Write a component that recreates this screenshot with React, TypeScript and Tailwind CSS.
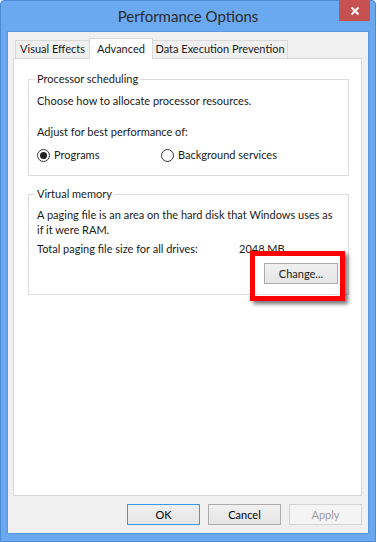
import React from 'react';

const font = { fontFamily: 'Lato, "Noto Sans", sans-serif' };

function Radio({ checked, label }: { checked?: boolean; label: string }) {
  return (
    <label className="flex items-center gap-[4px]">
      <span className="flex h-[13px] w-[13px] items-center justify-center rounded-full border border-[#333] bg-white">
        {checked && <span className="h-[7px] w-[7px] rounded-full bg-[#222]" />}
      </span>
      <span>{label}</span>
    </label>
  );
}

function GroupBox({ title, children }: { title: string; children: React.ReactNode }) {
  return (
    <div className="relative border border-[#dcdcdc]">
      <span className="absolute -top-[9px] left-[6px] bg-white px-[2px] leading-[16px]">{title}</span>
      {children}
    </div>
  );
}

function Button({ label, primary, disabled }: { label: string; primary?: boolean; disabled?: boolean }) {
  return (
    <button
      className={
        'flex h-[21px] w-[73px] items-center justify-center border bg-gradient-to-b from-[#f0f0f0] to-[#e5e5e5] leading-none ' +
        (primary
          ? 'border-[#3c96e4] text-black'
          : disabled
            ? 'border-[#d4d4d4] from-[#f4f4f4] to-[#f4f4f4] text-[#9c9c9c]'
            : 'border-[#acacac] text-black')
      }
    >
      {label}
    </button>
  );
}

export default function App() {
  return (
    <div className="h-[542px] w-[377px] bg-white text-[11px] text-[#1a1a1a]" style={font}>
      <div className="flex h-[542px] w-[376px] flex-col rounded-t-[4px] border border-[#4d8ad6] bg-[#6aa8f0]">
        <div className="relative flex h-[30px] items-center justify-center">
          <span className="text-[15px] text-[#2b2b2b]">Performance Options</span>
          <div className="absolute right-[5px] top-[-1px] flex h-[21px] w-[31px] items-center justify-center bg-[#c75050]">
            <svg width="10" height="10" viewBox="0 0 10 10">
              <path d="M1.5 1.5 L8.5 8.5 M8.5 1.5 L1.5 8.5" stroke="white" strokeWidth="2" />
            </svg>
          </div>
        </div>

        <div className="mx-[6px] mb-[7px] flex flex-1 flex-col border border-[#5a96dd] bg-[#f0f0f0] pl-[5px] pr-[6px] pt-[6px]">
          <div className="flex items-end pl-[2px]">
            <div className="flex h-[18px] w-[74px] items-center justify-center border border-b-0 border-r-0 border-[#d9d9d9] bg-[#f0f0f0]">Visual Effects</div>
            <div className="relative z-10 -mb-px flex h-[21px] w-[64px] items-center justify-center border border-b-0 border-[#d9d9d9] bg-white">Advanced</div>
            <div className="flex h-[18px] w-[135px] items-center justify-center border border-b-0 border-l-0 border-[#d9d9d9] bg-[#f0f0f0]">Data Execution Prevention</div>
          </div>

          <div className="h-[438px] border border-[#d9d9d9] bg-white pl-[14px] pr-[12px] pt-[20px]">
            <GroupBox title="Processor scheduling">
              <div className="pb-[12px] pl-[8px] pt-[13px] leading-[16px]">
                <div>Choose how to allocate processor resources.</div>
                <div className="mt-[15px]">Adjust for best performance of:</div>
                <div className="mt-[7px] flex">
                  <div className="w-[124px]">
                    <Radio checked label="Programs" />
                  </div>
                  <Radio label="Background services" />
                </div>
              </div>
            </GroupBox>

            <div className="mt-[18px]">
              <GroupBox title="Virtual memory">
                <div className="pb-[10px] pl-[8px] pr-[10px] pt-[12px] leading-[15px]">
                  <div>A paging file is an area on the hard disk that Windows uses as if it were RAM.</div>
                  <div className="mt-[4px] flex">
                    <span className="w-[202px]">Total paging file size for all drives:</span>
                    <span>2048 MB</span>
                  </div>
                  <div className="mt-[7px] flex justify-end">
                    <button className="flex h-[21px] w-[74px] items-center justify-center border border-[#acacac] bg-gradient-to-b from-[#f0f0f0] to-[#e5e5e5]">
                      Change...
                    </button>
                  </div>
                </div>
                <div className="absolute left-[221px] top-[56px] h-[50px] w-[95px] border-[5px] border-[#ff0000] shadow-[3px_3px_4px_rgba(0,0,0,0.55)]" />
              </GroupBox>
            </div>
          </div>

          <div className="flex justify-end gap-[8px] pt-[8px]">
            <Button label="OK" primary />
            <Button label="Cancel" />
            <Button label="Apply" disabled />
          </div>
        </div>
      </div>
    </div>
  );
}
